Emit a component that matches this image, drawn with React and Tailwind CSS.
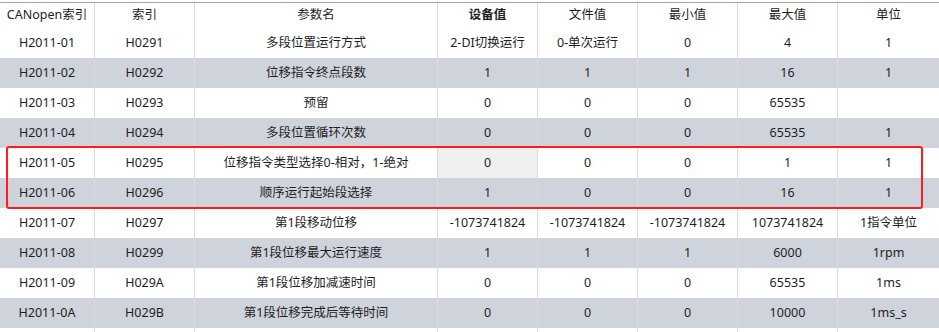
import React from "react";

const columns = ["CANopen索引", "索引", "参数名", "设备值", "文件值", "最小值", "最大值", "单位"];

const rows = [
  ["H2011-01", "H0291", "多段位置运行方式", "2-DI切换运行", "0-单次运行", "0", "4", "1"],
  ["H2011-02", "H0292", "位移指令终点段数", "1", "1", "1", "16", "1"],
  ["H2011-03", "H0293", "预留", "0", "0", "0", "65535", ""],
  ["H2011-04", "H0294", "多段位置循环次数", "0", "0", "0", "65535", "1"],
  ["H2011-05", "H0295", "位移指令类型选择0-相对，1-绝对", "0", "0", "0", "1", "1"],
  ["H2011-06", "H0296", "顺序运行起始段选择", "1", "0", "0", "16", "1"],
  ["H2011-07", "H0297", "第1段移动位移", "-1073741824", "-1073741824", "-1073741824", "1073741824", "1指令单位"],
  ["H2011-08", "H0299", "第1段位移最大运行速度", "1", "1", "1", "6000", "1rpm"],
  ["H2011-09", "H029A", "第1段位移加减速时间", "0", "0", "0", "65535", "1ms"],
  ["H2011-0A", "H029B", "第1段位移完成后等待时间", "0", "0", "0", "10000", "1ms_s"],
  ["", "", "", "", "", "", "", ""]
];

const gridCols = "grid grid-cols-[95px_100px_243px_100px_100px_100px_100px_101px]";

const Cell = ({ children, last, bold, selected, height }) => (
  <div
    className={`flex items-center justify-center whitespace-nowrap ${height} ${
      last ? "" : "border-r border-[#dadada]"
    } ${bold ? "font-bold" : ""} ${selected ? "bg-[#f0f0f0]" : ""}`}
  >
    {children}
  </div>
);

export default function App() {
  return (
    <div
      className="relative w-[939px] h-[332px] overflow-hidden bg-white text-[12.5px] text-[#1e1e1e]"
      style={{ fontFamily: '"Noto Sans", "Noto Sans CJK SC", sans-serif' }}
    >
      <div className="h-[2px]" />
      <div className="border-t border-[#a3a3a3]">
        {/* header */}
        <div className={gridCols}>
          {columns.map((c, i) => (
            <Cell key={c} height="h-[25px]" last={i === columns.length - 1} bold={i === 3}>
              {c}
            </Cell>
          ))}
        </div>

        {/* rows */}
        {rows.map((r, ri) => (
          <div key={ri} className={`${gridCols} ${ri % 2 === 1 ? "bg-[#cfd3db]" : "bg-white"}`}>
            {r.map((v, ci) => (
              <Cell
                key={ci}
                height="h-[30px]"
                last={ci === r.length - 1}
                selected={ri === 4 && ci === 3}
              >
                {v}
              </Cell>
            ))}
          </div>
        ))}
      </div>

      {/* red highlight box */}
      <div className="absolute left-[6px] top-[146px] w-[917px] h-[63px] border-2 border-[#ff1c1c] rounded-[3px]" />
    </div>
  );
}
